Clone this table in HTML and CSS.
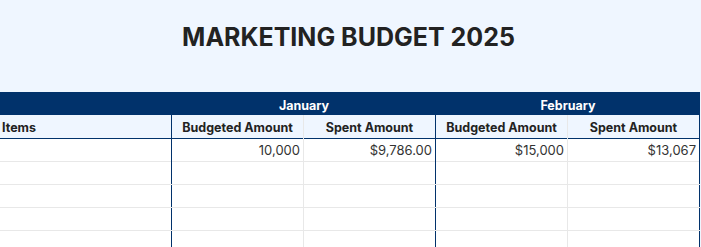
FILE: index.html
```html
<!DOCTYPE html>
<html lang="en">
<head>
<meta charset="utf-8">
<title>Marketing Budget 2025</title>
<link rel="stylesheet" href="styles.css">
</head>
<body>
<header class="page-header">
  <h1 class="title">MARKETING BUDGET 2025</h1>
</header>
<div class="sheet">
  <div class="row month-row">
    <div class="cell month-spacer"></div>
    <div class="cell month">January</div>
    <div class="cell month">February</div>
  </div>
  <div class="row head-row">
    <div class="cell head items">Items</div>
    <div class="cell head sub">Budgeted Amount</div>
    <div class="cell head end">Spent Amount</div>
    <div class="cell head sub">Budgeted Amount</div>
    <div class="cell head end">Spent Amount</div>
  </div>
  <div class="row data-row">
    <div class="cell items"></div>
    <div class="cell num sub">10,000</div>
    <div class="cell num end">$9,786.00</div>
    <div class="cell num sub">$15,000</div>
    <div class="cell num end">$13,067</div>
  </div>
  <div class="row data-row">
    <div class="cell items"></div>
    <div class="cell num sub"></div>
    <div class="cell num end"></div>
    <div class="cell num sub"></div>
    <div class="cell num end"></div>
  </div>
  <div class="row data-row">
    <div class="cell items"></div>
    <div class="cell num sub"></div>
    <div class="cell num end"></div>
    <div class="cell num sub"></div>
    <div class="cell num end"></div>
  </div>
  <div class="row data-row">
    <div class="cell items"></div>
    <div class="cell num sub"></div>
    <div class="cell num end"></div>
    <div class="cell num sub"></div>
    <div class="cell num end"></div>
  </div>
  <div class="row data-row">
    <div class="cell items"></div>
    <div class="cell num sub"></div>
    <div class="cell num end"></div>
    <div class="cell num sub"></div>
    <div class="cell num end"></div>
  </div>
</div>
</body>
</html>
```
FILE: styles.css
```css
* { box-sizing: border-box; }
html, body {
  margin: 0;
  padding: 0;
}
body {
  background: #eff6ff;
  font-family: Inter, "Noto Sans", sans-serif;
  color: #222;
  width: 701px;
  overflow: hidden;
}
.page-header {
  height: 92px;
  padding-top: 25px;
  text-align: center;
}
.title {
  margin: 0 4px 0 0;
  font-size: 25px;
  line-height: 25px;
  font-weight: 700;
  color: #222;
  letter-spacing: 0;
}
.sheet {
  width: 700px;
}
.row {
  display: grid;
  grid-template-columns: 172px 132px 132px 132px 132px;
}
.month-row {
  grid-template-columns: 172px 264px 264px;
  background: #01326b;
  height: 23px;
}
.month {
  color: #fff;
  font-weight: 700;
  font-size: 12.5px;
  text-align: center;
  line-height: 28px;
}
.head-row {
  height: 24px;
  background: #eff6ff;
  border-bottom: 1px solid #01326b;
}
.head {
  font-weight: 700;
  font-size: 12.5px;
  text-align: center;
  line-height: 26px;
  color: #222;
}
.head.items {
  text-align: left;
  padding-left: 2px;
}
.data-row {
  height: 23px;
  background: #fff;
  border-bottom: 1px solid #e8e8e8;
}
.cell.items {
  border-right: 1px solid #01326b;
}
.cell.sub {
  border-right: 1px solid #e8e8e8;
}
.cell.end {
  border-right: 1px solid #01326b;
}
.num {
  font-size: 13px;
  text-align: right;
  padding-right: 3px;
  line-height: 23px;
  color: #333;
}
```
